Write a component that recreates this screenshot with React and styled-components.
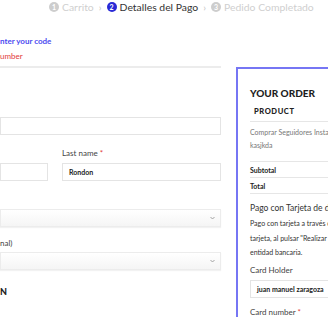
import React from "react";
import styled, { createGlobalStyle } from "styled-components";

const Global = createGlobalStyle`
  html, body {
    margin: 0;
    padding: 0;
    background: #fff;
    overflow: hidden;
  }
  body {
    font-family: "Lato", "Noto Sans", sans-serif;
    color: #333;
  }
`;

const Page = styled.div`
  width: 328px;
  height: 320px;
  overflow: hidden;
`;

const Steps = styled.nav`
  display: flex;
  align-items: center;
  height: 14px;
  padding-left: 49px;
  white-space: nowrap;
  font-size: 10.4px;
`;

const Step = styled.span`
  display: flex;
  align-items: center;
  gap: 3px;
  color: ${(p) => (p.active ? "#333" : "#cfcfcf")};
`;

const Dot = styled.span`
  width: 10px;
  height: 10px;
  border-radius: 50%;
  background: ${(p) => (p.active ? "#2a2ad6" : "#cdcdcd")};
  color: #fff;
  font-size: 7px;
  font-weight: 700;
  display: flex;
  align-items: center;
  justify-content: center;
`;

const Sep = styled.span`
  color: #c4c4c4;
  font-size: 10px;
  margin: 0 5px;
`;

const Columns = styled.div`
  display: flex;
  gap: 15px;
  align-items: flex-start;
`;

const Left = styled.div`
  flex: 0 0 221px;
  display: flex;
  flex-direction: column;
`;

const Notice = styled.div`
  font-size: 8px;
  line-height: 12px;
  margin-top: ${(p) => p.mt}px;
  color: ${(p) => (p.error ? "#e23b3b" : "#4b4bf0")};
  font-weight: ${(p) => (p.error ? 400 : 700)};
`;

const Rule = styled.div`
  height: 2px;
  background: #ececec;
  margin-top: 4px;
`;

const Input = styled.div`
  box-sizing: border-box;
  height: 18px;
  border: 1px solid #e4e4e4;
  background: #fff;
  font-size: 7px;
  font-weight: 700;
  color: #222;
  display: flex;
  align-items: center;
  padding-left: 6px;
  margin-top: ${(p) => p.mt || 0}px;
`;

const Label = styled.div`
  font-size: 8px;
  line-height: 10px;
  color: #444;
  margin-top: ${(p) => p.mt || 0}px;
  white-space: nowrap;
  span {
    color: #e23b3b;
  }
`;

const NameRow = styled.div`
  display: grid;
  grid-template-columns: 48px 159px;
  column-gap: 14px;
  margin-top: 13px;
`;

const Field = styled.div`
  display: flex;
  flex-direction: column;
  justify-content: flex-end;
`;

const Select = styled.div`
  box-sizing: border-box;
  height: 18px;
  border: 1px solid #ececec;
  background: linear-gradient(#ffffff, #f5f5f5);
  box-shadow: 0 1px 1px rgba(0, 0, 0, 0.05);
  display: flex;
  align-items: center;
  justify-content: flex-end;
  padding-right: 5px;
  margin-top: ${(p) => p.mt}px;
`;

const Heading = styled.div`
  font-size: 9px;
  font-weight: 900;
  line-height: 12px;
  color: #222;
  margin-top: 16px;
`;

const Order = styled.div`
  flex: 0 0 200px;
  margin-top: 53px;
  border-top: 2px solid #7676f4;
  border-left: 2px solid #7676f4;
  padding: 18px 0 0 12px;
  white-space: nowrap;
`;

const OrderTitle = styled.div`
  font-size: 10px;
  font-weight: 900;
  line-height: 12px;
  color: #1e1e1e;
`;

const Row = styled.div`
  border-bottom: 1px solid #e6e6e6;
  padding: ${(p) => p.pad};
  font-size: 7px;
  line-height: ${(p) => p.lh || 10}px;
  color: ${(p) => (p.muted ? "#777" : "#222")};
  font-weight: ${(p) => (p.bold ? 700 : 400)};
`;

const ColHead = styled.div`
  font-size: 7.5px;
  font-weight: 900;
  letter-spacing: 0.6px;
  line-height: 10px;
  color: #222;
  padding: 8px 0 4px 4px;
  border-bottom: 1px solid #e6e6e6;
`;

const PayTitle = styled.div`
  font-size: 8.5px;
  line-height: 12px;
  color: #333;
  margin-top: 8px;
`;

const PayText = styled.p`
  margin: 2px 0 0;
  font-size: 7px;
  line-height: 14.5px;
  color: #333;
`;

const Chevron = () => (
  <svg width="5" height="4" viewBox="0 0 5 4">
    <path d="M0.5 1l2 2 2-2" fill="none" stroke="#999" strokeWidth="0.9" />
  </svg>
);

export default function App() {
  return (
    <Page>
      <Global />
      <Steps>
        <Step>
          <Dot>1</Dot>Carrito
        </Step>
        <Sep>›</Sep>
        <Step active>
          <Dot active>2</Dot>Detalles del Pago
        </Step>
        <Sep>›</Sep>
        <Step>
          <Dot>3</Dot>Pedido Completado
        </Step>
      </Steps>
      <Columns>
        <Left>
          <Notice mt={21}>nter your code</Notice>
          <Notice error mt={3}>umber</Notice>
          <Rule />
          <Input mt={49} />
          <NameRow>
            <Field>
              <Input />
            </Field>
            <Field>
              <Label>
                Last name <span>*</span>
              </Label>
              <Input mt={5}>Rondon</Input>
            </Field>
          </NameRow>
          <Select mt={28}>
            <Chevron />
          </Select>
          <Label mt={11}>nal)</Label>
          <Select mt={4}>
            <Chevron />
          </Select>
          <Heading>N</Heading>
        </Left>
        <Order>
          <OrderTitle>YOUR ORDER</OrderTitle>
          <ColHead>PRODUCT</ColHead>
          <Row muted lh={13} pad="4px 0 9px">
            Comprar Seguidores Instagram × 1
            <br />
            kasjkda
          </Row>
          <Row bold pad="3px 0 2px">Subtotal</Row>
          <Row bold pad="3px 0 2px">Total</Row>
          <PayTitle>Pago con Tarjeta de débito o crédito</PayTitle>
          <PayText>
            Pago con tarjeta a través de Redsys. Introduce los datos de tu
            <br />
            tarjeta, al pulsar "Realizar pedido" serás redirigido a tu
            <br />
            entidad bancaria.
          </PayText>
          <Label mt={5}>Card Holder</Label>
          <Input mt={5}>juan manuel zaragoza</Input>
          <Label mt={9}>
            Card number <span>*</span>
          </Label>
        </Order>
      </Columns>
    </Page>
  );
}
